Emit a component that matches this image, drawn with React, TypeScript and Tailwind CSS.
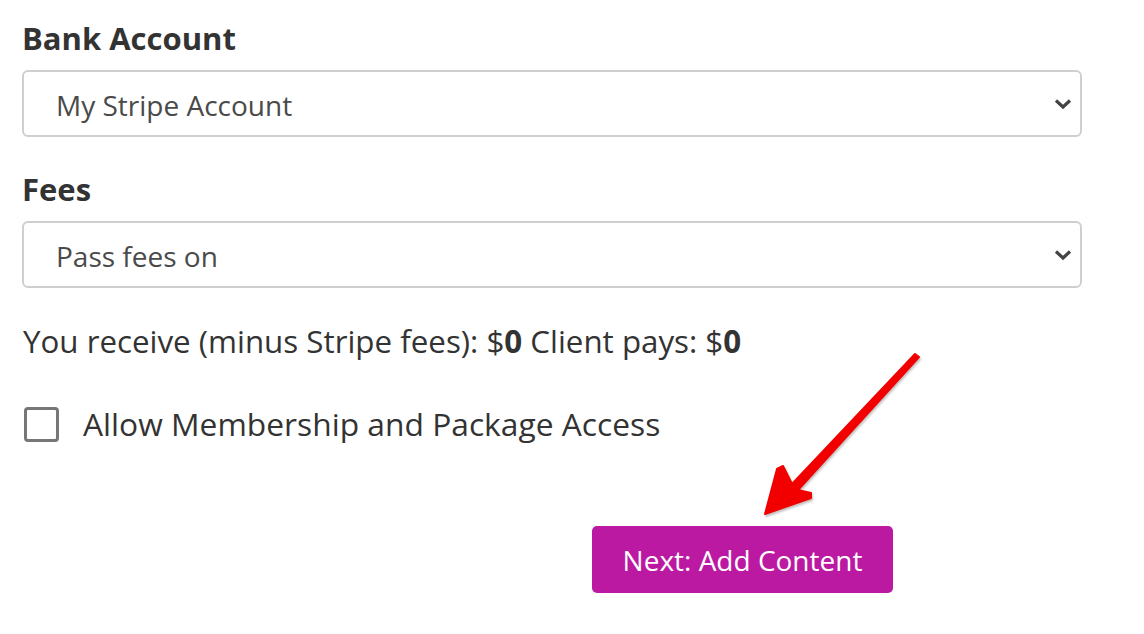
const font = { fontFamily: '"Open Sans", "Liberation Sans", sans-serif' };

function Chevron() {
  return (
    <svg width="18" height="12" viewBox="0 0 18 12" className="text-[#444]">
      <path d="M2 2.5 L9 9 L16 2.5" fill="none" stroke="currentColor" strokeWidth="3.2" />
    </svg>
  );
}

function SelectBox({ value }: { value: string }) {
  return (
    <div className="flex h-[67px] w-[1060px] items-center justify-between rounded-[6px] border-2 border-[#cfcfcf] bg-white pl-[32px] pr-[8px]">
      <span className="pt-[3px] text-[28px] leading-[40px] text-[#4a4a4a]">{value}</span>
      <Chevron />
    </div>
  );
}

function Arrow() {
  return (
    <svg
      className="pointer-events-none absolute left-[740px] top-[340px] drop-shadow-[1px_2px_1px_rgba(0,0,0,0.25)]"
      width="200"
      height="200"
      viewBox="740 340 200 200"
    >
      <polygon
        points="765,514 777,469 783,466 792,484 915,354 919,357 798,490 811,493 811,498"
        fill="#f20000"
        stroke="#f20000"
        strokeWidth="2"
        strokeLinejoin="round"
      />
    </svg>
  );
}

export default function App() {
  return (
    <div className="relative h-[634px] w-[1144px] bg-white pl-[22px] pt-[18px] text-[#333]" style={font}>
      <h2 className="text-[31px] font-bold leading-[40px]">Bank Account</h2>
      <div className="mt-[12px]">
        <SelectBox value="My Stripe Account" />
      </div>
      <h2 className="mt-[32px] text-[31px] font-bold leading-[40px]">Fees</h2>
      <div className="mt-[12px]">
        <SelectBox value="Pass fees on" />
      </div>
      <p className="ml-[1px] mt-[33px] text-[31.3px] leading-[40px]">
        You receive (minus Stripe fees): $<b>0</b> Client pays: $<b>0</b>
      </p>
      <label className="mt-[43px] flex items-center gap-[24px]">
        <span className="ml-[2px] block h-[35px] w-[35px] rounded-[4px] border-[3px] border-[#777] bg-white" />
        <span className="text-[31.75px] leading-[40px]">Allow Membership and Package Access</span>
      </label>
      <div className="mt-[82px] pl-[570px]">
        <button className="h-[67px] w-[301px] rounded-[5px] bg-[#bc19a3] text-[28px] text-white">
          Next: Add Content
        </button>
      </div>
      <Arrow />
    </div>
  );
}
